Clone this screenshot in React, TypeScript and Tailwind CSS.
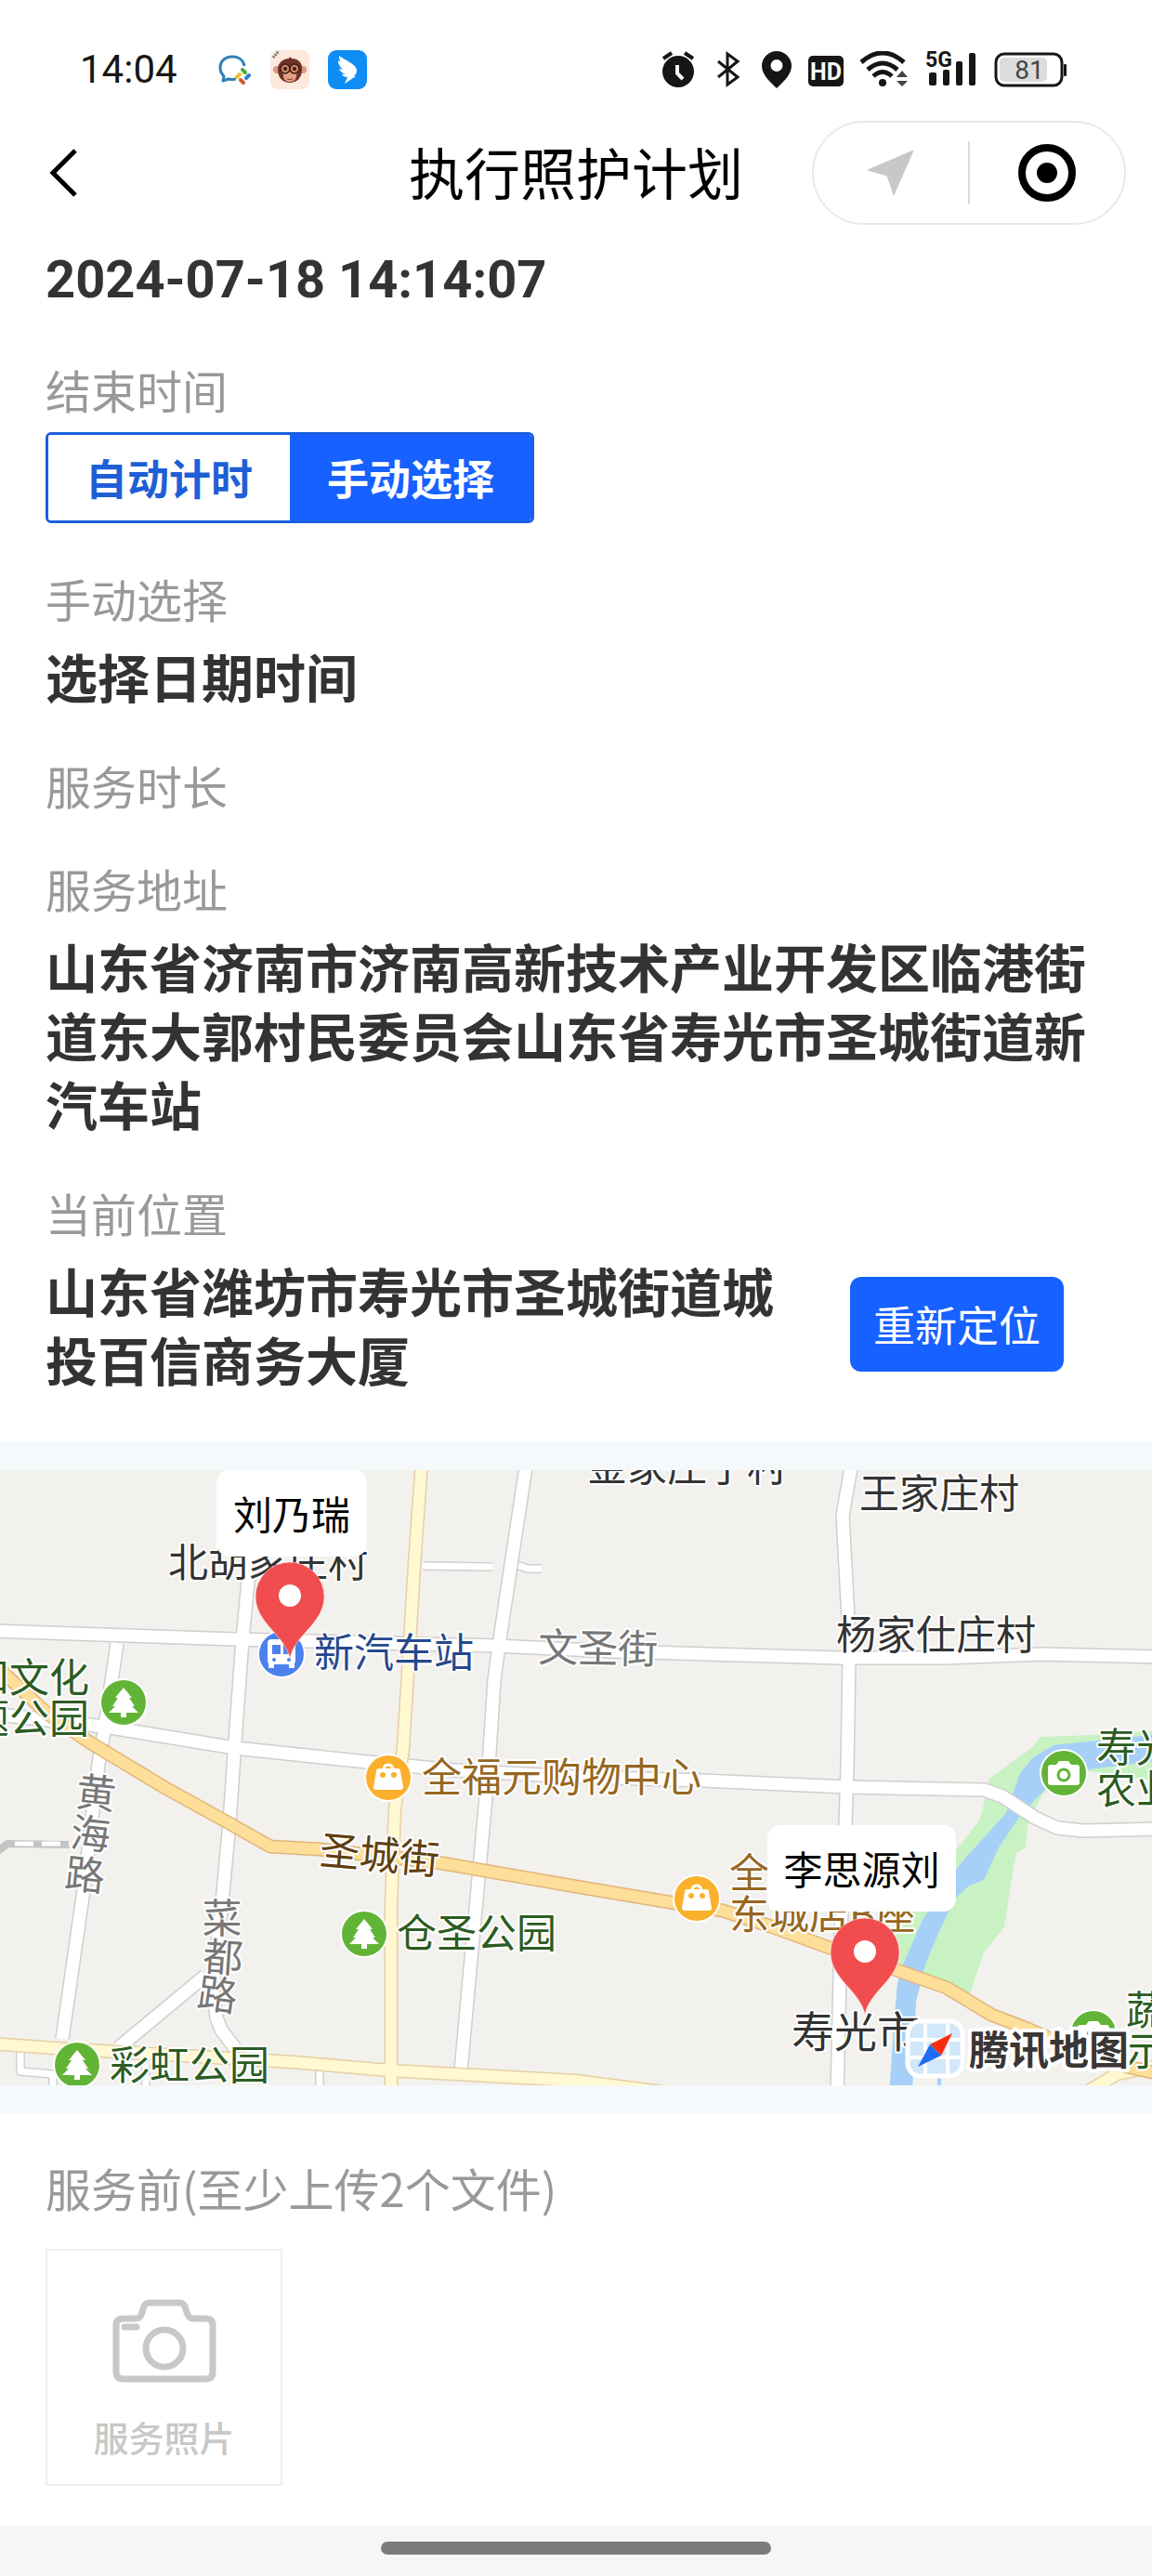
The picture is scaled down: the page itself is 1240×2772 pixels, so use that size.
import { useState } from 'react';
import type { ReactNode } from 'react';

type TimingMode = 'auto' | 'manual';

interface Label {
  text: string;
  x: number;
  y: number;
  color?: string;
  size?: number;
  anchor?: 'start' | 'middle' | 'end';
  rotate?: number;
}

const WHITE_ROADS = [
  'M-10 173L253 182L534 189L660 195L905 202L1015 202L1122 198L1250 201',
  'M270 90L261 182L253 292L247 379L239 466L234 510L229 560L233 589L238 602L253 622',
  'M221 544L127 622',
  'M126 186L113 276L106 316L89 459L67 612',
  'M-10 262L113 276L253 299L395 314L490 323L620 330L758 334L911 341L1059 344L1079 351L1114 374L1138 385L1166 388L1250 386',
  'M567 -10L550 102L538 182L532 226L526 319L516 429L504 559L496 647',
  'M919 -20L907 49L913 159L914 202L912 319L910 382L905 499L901 672',
];

const THIN_ROADS = [
  'M455 103L530 104M556 102L568 106L583 106',
  'M22 627V647L57 650V672',
  'M344 645V672',
  'M157 640V672',
];

const YELLOW_ROADS = [
  'M454 -10L446 102L441 186L434 299L425 366L421 466L421 672',
  'M-10 617L59 622L316 637L419 646L620 657L720 670',
  'M1160 675L1202 650L1250 640',
];

const ORANGE_ROADS = [
  'M-10 205L8 222L51 262L95 292L178 342L245 379L291 405L344 408L470 422L620 448L727 466L778 474L830 491L893 514L968 539L1019 557L1067 586L1106 601L1160 625L1213 642L1250 650',
];

const LABELS: Label[] = [
  { text: '金家庄子村', x: 632, y: 12 },
  { text: '王家庄村', x: 925, y: 41 },
  { text: '北胡家庄村', x: 181, y: 115 },
  { text: '文圣街', x: 579, y: 206, color: '#777777', rotate: 1 },
  { text: '杨家仕庄村', x: 900, y: 193 },
  { text: '新汽车站', x: 338, y: 212, color: '#27488c' },
  { text: '和文化', x: 96, y: 239, color: '#2c5c22', anchor: 'end' },
  { text: '题公园', x: 96, y: 283, color: '#2c5c22', anchor: 'end' },
  { text: '全福元购物中心', x: 454, y: 346, color: '#96671f' },
  { text: '圣城街', x: 343, y: 424, color: '#5f400f', rotate: 5 },
  { text: '仓圣公园', x: 427, y: 514, color: '#2c5c22' },
  { text: '彩虹公园', x: 118, y: 656, color: '#2c5c22' },
  { text: '全福元', x: 785, y: 449, color: '#96671f' },
  { text: '东城店B座', x: 785, y: 494, color: '#96671f' },
  { text: '黄', x: 102, y: 363, color: '#777777', anchor: 'middle', rotate: 6 },
  { text: '海', x: 96, y: 407, color: '#777777', anchor: 'middle', rotate: 6 },
  { text: '路', x: 90, y: 451, color: '#777777', anchor: 'middle', rotate: 6 },
  { text: '菜', x: 239, y: 498, color: '#777777', anchor: 'middle' },
  { text: '都', x: 239, y: 540, color: '#777777', anchor: 'middle', rotate: 4 },
  { text: '路', x: 232, y: 580, color: '#777777', anchor: 'middle', rotate: 8 },
  { text: '寿光', x: 1180, y: 314, color: '#2c5c22' },
  { text: '农业', x: 1180, y: 359, color: '#2c5c22' },
  { text: '蔬菜', x: 1212, y: 597, color: '#2c5c22' },
  { text: '示范', x: 1212, y: 641, color: '#2c5c22' },
  { text: '寿光市', x: 852, y: 621, size: 46 },
];

function Roads({ paths, width, fill, edge }: { paths: string[]; width: number; fill: string; edge: string }) {
  return (
    <g fill="none" strokeLinejoin="round">
      {paths.map((d) => (
        <path key={d} d={d} stroke={edge} strokeWidth={width + 3} />
      ))}
      {paths.map((d) => (
        <path key={d} d={d} stroke={fill} strokeWidth={width} />
      ))}
    </g>
  );
}

function Poi({ x, y, color, children }: { x: number; y: number; color: string; children: ReactNode }) {
  return (
    <g transform={`translate(${x} ${y})`}>
      <circle r="26" fill="#ffffff" />
      <circle r="24" fill={color} />
      {children}
    </g>
  );
}

function TreePoi({ x, y }: { x: number; y: number }) {
  return (
    <Poi x={x} y={y} color="#62b436">
      <path d="M0 -16L9 -5H6L12 4H9L16 11H3V16H-3V11H-16L-9 4H-12L-6 -5H-9Z" fill="#ffffff" />
    </Poi>
  );
}

function ShopPoi({ x, y }: { x: number; y: number }) {
  return (
    <Poi x={x} y={y} color="#fbb02c">
      <path d="M-5 -8Q-5 -14 0 -14Q5 -14 5 -8" fill="none" stroke="#ffffff" strokeWidth="3" />
      <path d="M-10 -10H10Q13 -10 13 -7L16 10Q16 13 13 13H-13Q-16 13 -16 10L-13 -7Q-13 -10 -10 -10Z" fill="#ffffff" />
      <circle cx="-6" cy="-3" r="3" fill="#fbb02c" />
      <circle cx="6" cy="-3" r="3" fill="#fbb02c" />
    </Poi>
  );
}

function CameraPoi({ x, y }: { x: number; y: number }) {
  return (
    <Poi x={x} y={y} color="#62b436">
      <path d="M-14 -9H-8L-5 -13H5L8 -9H14Q17 -9 17 -6V10Q17 13 14 13H-14Q-17 13 -17 10V-6Q-17 -9 -14 -9Z" fill="#ffffff" />
      <circle cy="2" r="6" fill="none" stroke="#62b436" strokeWidth="3" />
    </Poi>
  );
}

function Pin({ x, y }: { x: number; y: number }) {
  return (
    <g transform={`translate(${x} ${y})`}>
      <path
        d="M0 104C-5 78 -37 66 -37 37A37 37 0 0 1 37 37C37 66 5 78 0 104Z"
        fill="#f14d4e"
        stroke="#ffffff"
        strokeOpacity="0.5"
      />
      <circle cy="36" r="12" fill="#ffffff" />
    </g>
  );
}

function Callout({ x, y, width, name }: { x: number; y: number; width: number; name: string }) {
  return (
    <g>
      <rect x={x} y={y} width={width} height="93" rx="14" fill="#ffffff" />
      <text x={x + width / 2} y={y + 64} fontSize="42" textAnchor="middle" fill="#000000">
        {name}
      </text>
    </g>
  );
}

function TencentMark() {
  return (
    <g>
      <rect x="977" y="593" width="59" height="59" rx="14" fill="#d3e7fb" stroke="#ffffff" strokeWidth="5" />
      <path d="M996 596V650M1020 596V650M980 613H1033M980 632H1033" stroke="#ffffff" strokeWidth="4" />
      <path d="M1025 606L1013 630L1001 618Z" fill="#fb2c10" />
      <path d="M988 642L1001 618L1013 630Z" fill="#1f6df5" />
      <text
        x="1043"
        y="640"
        fontSize="43"
        fontWeight="700"
        fill="#3a3636"
        stroke="#ffffff"
        strokeWidth="8"
        strokeLinejoin="round"
        paintOrder="stroke"
      >
        腾讯地图
      </text>
    </g>
  );
}

function ServiceMap() {
  return (
    <svg
      viewBox="0 0 1240 662"
      preserveAspectRatio="xMidYMid slice"
      className="block h-[662px] w-full bg-[#f2f1ed]"
      role="img"
      aria-label="地图"
    >
      <path
        d="M1120 287L1177 285L1250 280V335L1180 325L1160 322L1122 349L1106 382L1104 406L1094 412L1087 452L1081 492L1059 519L1043 566L994 546L968 539L964 500L984 472L1029 409L1055 376L1065 332L1110 299Z"
        fill="#c8f2c3"
      />
      <path
        d="M1112 309L1134 296L1181 291L1250 284V312L1173 322L1130 338L1098 372L1075 406L1059 441L1043 447L1027 462L1011 496L996 532L986 572L982 672H957L963 586L966 552L972 532L994 482L1029 430L1035 422L1083 369L1098 326Z"
        fill="#a6d0f7"
      />
      <path d="M1011 640V672" stroke="#a6d0f7" strokeWidth="4" />
      <path d="M-5 412L8 402L75 403" fill="none" stroke="#c4c4c4" strokeWidth="8" />
      <path d="M16 402H75" stroke="#ffffff" strokeWidth="5" strokeDasharray="20 9" />

      <Roads paths={THIN_ROADS} width={7} fill="#ffffff" edge="#d2d0d2" />
      <Roads paths={WHITE_ROADS} width={13} fill="#ffffff" edge="#d0ced0" />
      <Roads paths={YELLOW_ROADS} width={12} fill="#fff8d0" edge="#e6cfa4" />
      <Roads paths={ORANGE_ROADS} width={12} fill="#fddf9a" edge="#e3b47a" />

      <TreePoi x={133} y={250} />
      <TreePoi x={392} y={499} />
      <TreePoi x={83} y={640} />
      <ShopPoi x={418} y={331} />
      <ShopPoi x={750} y={461} />
      <CameraPoi x={1145} y={326} />
      <CameraPoi x={1177} y={606} />
      <Poi x={303} y={198} color="#4c80ee">
        <rect x="-15" y="-16" width="30" height="27" rx="4" fill="#ffffff" />
        <path d="M-10 -10H-1V0H-10ZM2 -10H11V0H2Z" fill="#4c80ee" />
        <circle cx="-8" cy="6" r="2" fill="#4c80ee" />
        <circle cx="8" cy="6" r="2" fill="#4c80ee" />
        <path d="M-14 10H-8V15H-14ZM8 10H14V15H8Z" fill="#ffffff" />
      </Poi>

      <g stroke="#ffffff" strokeWidth="4" strokeLinejoin="round" paintOrder="stroke">
        {LABELS.map((label) => (
          <text
            key={`${label.text}-${label.x}`}
            x={label.x}
            y={label.y}
            fontSize={label.size ?? 43}
            fill={label.color ?? '#333333'}
            textAnchor={label.anchor}
            transform={label.rotate ? `rotate(${label.rotate} ${label.x} ${label.y})` : undefined}
          >
            {label.text}
          </text>
        ))}
      </g>

      <Callout x={233} y={0} width={162} name="刘乃瑞" />
      <Callout x={826} y={382} width={203} name="李思源刘" />
      <Pin x={312} y={99} />
      <Pin x={931} y={482} />
      <TencentMark />
    </svg>
  );
}

function StatusBar() {
  return (
    <div className="flex h-[130px] items-center justify-between pt-5 pr-[91px] pl-[86px] text-[#161616]">
      <div className="flex items-center gap-5">
        <span className="mr-6 font-[Roboto] text-[42px] leading-[42px]">14:04</span>
        <svg className="h-[42px] w-[36px]" viewBox="0 0 36 42">
          <path
            d="M28 17C27 10 21 7 15 7C7 7 2 12 2 19C2 23 4 26 6 28L5 33L11 31C14 32 17 31 19 31"
            fill="none"
            stroke="#2f7fb8"
            strokeWidth="3"
            strokeLinejoin="round"
          />
          <path d="M26 21L29 24" stroke="#54a836" strokeWidth="4" strokeLinecap="round" />
          <path d="M33 27L30 30" stroke="#2f7fc4" strokeWidth="4" strokeLinecap="round" />
          <path d="M27 35L24 32" stroke="#d8542c" strokeWidth="4" strokeLinecap="round" />
          <path d="M20 29L23 26" stroke="#e6c22c" strokeWidth="4" strokeLinecap="round" />
        </svg>
        <svg className="h-[42px] w-[42px]" viewBox="0 0 42 42">
          <rect width="42" height="42" rx="8" fill="#fde9dc" />
          <path d="M3 8L9 1" stroke="#777777" strokeWidth="3" strokeDasharray="2 1" />
          <circle cx="7" cy="21" r="4" fill="#d99a82" />
          <circle cx="35" cy="21" r="4" fill="#d99a82" />
          <path d="M21 7L23 9C31 9 35 15 34 21C34 30 28 35 21 35C14 35 8 30 8 21C8 14 13 9 20 9Z" fill="#6c3228" />
          <path d="M21 17C25 13 32 15 31 22C30 24 28 25 28 27C28 32 25 34 21 34C17 34 14 32 14 27C14 25 12 24 11 22C10 15 17 13 21 17Z" fill="#e3a184" />
          <g fill="#c98468" stroke="#3c1a14" strokeWidth="1.5">
            <circle cx="16" cy="20" r="5" />
            <circle cx="26" cy="20" r="5" />
          </g>
          <circle cx="16" cy="20" r="2" fill="#3c1a14" />
          <circle cx="26" cy="20" r="2" fill="#3c1a14" />
          <path d="M18 31Q21 32 24 31" fill="none" stroke="#7a3a2c" />
        </svg>
        <svg className="h-[42px] w-[42px]" viewBox="0 0 42 42">
          <rect width="42" height="42" rx="9" fill="#108df5" />
          <path
            d="M12 6C20 12 31 15 31 22C31 24 30 26 28 28H30L18 36L21 29C18 29 16 28 15 26L19 26C15 25 13 22 12 20L16 21C12 17 11 14 11 11L14 13C12 10 12 8 12 6Z"
            fill="#ffffff"
          />
        </svg>
      </div>

      <div className="flex items-center gap-[18px] font-[Roboto]">
        <svg className="h-10 w-9" viewBox="0 0 36 40" fill="none" stroke="currentColor">
          <circle cx="18" cy="22" r="17" fill="currentColor" stroke="none" />
          <path d="M2 8L11 2M34 8L25 2" strokeWidth="4" />
          <path d="M17 15V24L23 30" stroke="#ffffff" strokeWidth="4" />
        </svg>
        <svg className="h-10 w-9" viewBox="-6 0 36 40" fill="none" stroke="currentColor" strokeWidth="3">
          <path d="M1 11L22 28L11 36V3L22 11L1 28" />
        </svg>
        <svg className="h-10 w-8" viewBox="0 0 32 40">
          <path
            fillRule="evenodd"
            d="M16 0A16 16 0 0 1 32 16C32 26 21 35 16 40C11 35 0 26 0 16A16 16 0 0 1 16 0ZM16 9A6.5 6.5 0 1 0 16 22A6.5 6.5 0 1 0 16 9Z"
            fill="currentColor"
          />
        </svg>
        <svg className="h-10 w-[38px]" viewBox="0 0 38 40">
          <rect y="5" width="38" height="33" rx="5" fill="currentColor" />
          <text x="19" y="31" fontSize="25" fontWeight="700" textAnchor="middle" fill="#ffffff">
            HD
          </text>
        </svg>
        <svg className="h-10 w-[52px]" viewBox="0 0 52 40" fill="none" stroke="currentColor" strokeWidth="5">
          <path d="M1 12Q24 -8 47 12M8 20Q24 6 40 20M14 27Q24 18 34 27" />
          <circle cx="24" cy="34" r="4" fill="currentColor" stroke="none" />
          <path d="M39 28L45 21L51 28ZM39 32L45 38L51 32Z" fill="#444444" stroke="none" />
        </svg>
        <svg className="h-10 w-14" viewBox="0 0 56 40" fill="currentColor">
          <rect x="4" y="23" width="8" height="14" rx="2" />
          <rect x="19" y="20" width="7" height="17" rx="2" />
          <rect x="33" y="11" width="7" height="26" rx="2" />
          <rect x="47" y="2" width="7" height="35" rx="2" />
          <text x="0" y="17" fontSize="23" fontWeight="700">
            5G
          </text>
        </svg>
        <svg className="h-10 w-[79px]" viewBox="0 0 79 40">
          <rect x="2" y="3" width="71" height="34" rx="9" fill="#ffffff" stroke="currentColor" strokeWidth="3" />
          <rect x="6" y="7" width="51" height="26" rx="5" fill="#dcdcdc" />
          <rect x="75" y="14" width="3" height="13" rx="1" fill="currentColor" />
          <text x="38" y="30" fontSize="28" textAnchor="middle" fill="#444444">
            81
          </text>
        </svg>
      </div>
    </div>
  );
}

function NavBar() {
  return (
    <header className="grid grid-cols-[1fr_auto_1fr] items-center px-7">
      <button type="button" aria-label="返回" className="flex h-[112px] w-20 items-center justify-center">
        <svg className="h-[56px] w-[36px]" viewBox="0 0 36 56" fill="none" stroke="#000000" strokeWidth="5">
          <path d="M31 4L7 28L31 52" />
        </svg>
      </button>
      <h1 className="pb-1 text-[60px] leading-[74px] text-black">执行照护计划</h1>
      <div className="flex h-[112px] w-[338px] items-center justify-self-end rounded-full border-2 border-[#e9e9e9]">
        <button type="button" aria-label="定位" className="flex flex-1 items-center justify-center">
          <svg className="h-[50px] w-[50px]" viewBox="0 0 50 50">
            <path d="M49 1L28 49L21 28L0 22Z" fill="#c8c8c8" stroke="#c8c8c8" strokeLinejoin="round" />
          </svg>
        </button>
        <span className="h-[68px] w-0.5 bg-[#dcdcdc]" />
        <button type="button" aria-label="关闭" className="flex flex-1 items-center justify-center">
          <svg className="h-[62px] w-[62px]" viewBox="0 0 62 62">
            <circle cx="31" cy="31" r="27" fill="none" stroke="#000000" strokeWidth="8" />
            <circle cx="31" cy="31" r="11" fill="#000000" />
          </svg>
        </button>
      </div>
    </header>
  );
}

function Field({ label, children }: { label: string; children?: ReactNode }) {
  return (
    <section className="flex flex-col items-start gap-4">
      <h2 className="text-[49px] leading-[60px] text-[#999999]">{label}</h2>
      {children}
    </section>
  );
}

const MODES: { id: TimingMode; label: string }[] = [
  { id: 'auto', label: '自动计时' },
  { id: 'manual', label: '手动选择' },
];

export default function App() {
  const [mode, setMode] = useState<TimingMode>('manual');

  return (
    <div className="flex min-h-screen flex-col bg-white font-['Noto_Sans_CJK_SC',sans-serif]">
      <StatusBar />
      <NavBar />

      <main>
        <div className="flex flex-col gap-[51px] px-[49px] pt-[22px] pb-[52px] text-[56px] leading-[74px] text-[#333333]">
          <p className="font-[Roboto] font-bold">2024-07-18 14:14:07</p>

          <Field label="结束时间">
            <div className="flex overflow-hidden rounded-md border-3 border-[#1a5fe0]">
              {MODES.map(({ id, label }) => (
                <button
                  key={id}
                  type="button"
                  aria-pressed={mode === id}
                  onClick={() => setMode(id)}
                  className={`h-[92px] px-10 text-[45px] leading-[60px] font-bold ${
                    mode === id ? 'bg-[#1661ff] text-white' : 'bg-white text-[#1f5fd6]'
                  }`}
                >
                  {label}
                </button>
              ))}
            </div>
          </Field>

          <Field label="手动选择">
            <button type="button" className="font-bold">
              选择日期时间
            </button>
          </Field>

          <Field label="服务时长" />

          <Field label="服务地址">
            <p className="font-bold">
              山东省济南市济南高新技术产业开发区临港街道东大郭村民委员会山东省寿光市圣城街道新汽车站
            </p>
          </Field>

          <Field label="当前位置">
            <div className="flex w-full items-center gap-[60px] pr-[46px]">
              <p className="flex-1 font-bold">山东省潍坊市寿光市圣城街道城投百信商务大厦</p>
              <button
                type="button"
                className="h-[102px] shrink-0 rounded-xl bg-[#1661ff] px-[25px] text-[45px] leading-[60px] text-white"
              >
                重新定位
              </button>
            </div>
          </Field>
        </div>

        <div className="bg-[#f5f9fc] py-[31px]">
          <ServiceMap />
        </div>

        <div className="flex flex-col items-start gap-9 px-[49px] pt-[49px] pb-[43px]">
          <h2 className="text-[49px] leading-[60px] text-[#999999]">服务前(至少上传2个文件)</h2>
          <label className="flex h-[255px] w-[255px] cursor-pointer flex-col items-center border-2 border-[#eeeeee] pt-[52px] text-[38px] leading-[60px] font-medium text-[#c8c8c8]">
            <input type="file" accept="image/*" multiple className="sr-only" />
            <svg className="mb-7 h-[90px] w-[112px]" viewBox="0 0 112 90" fill="none" stroke="currentColor" strokeWidth="7">
              <path d="M12 21H24C31 21 31 17 33 11C34 6 36 4 40 4H72C76 4 78 6 79 11C81 17 82 21 87 21H100Q108 21 108 28V78Q108 86 100 86H12Q4 86 4 78V28Q4 21 12 21Z" />
              <circle cx="56" cy="53" r="20" />
              <path d="M13 30H26" strokeLinecap="round" />
            </svg>
            服务照片
          </label>
        </div>
      </main>

      <footer className="mt-auto flex h-14 justify-center bg-[#f6f6f6] pt-[17px]">
        <span className="h-[14px] w-[420px] rounded-full bg-[#7c7c7c]" />
      </footer>
    </div>
  );
}
